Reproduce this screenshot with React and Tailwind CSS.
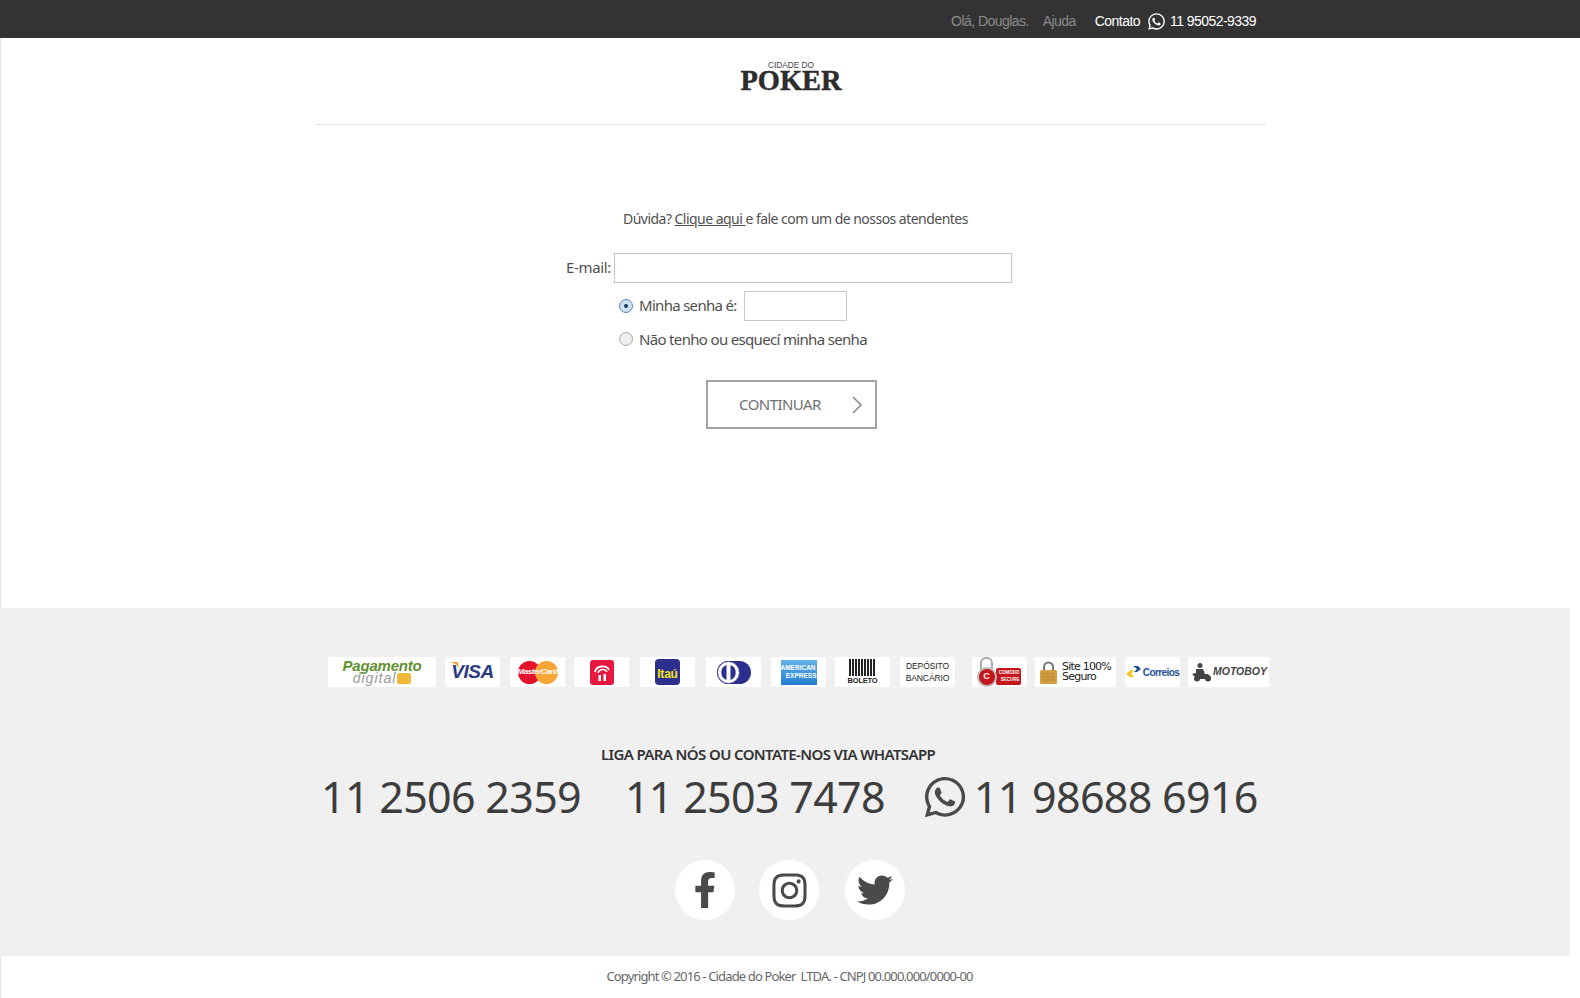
import { FaWhatsapp, FaFacebookF, FaInstagram, FaTwitter } from "react-icons/fa";

const pt = "font-['Noto_Sans',sans-serif]";

function Card({ w, ml = "", children }) {
  return (
    <div className={`${w} ${ml} h-[30px] bg-white flex items-center justify-center shrink-0 overflow-hidden`}>
      {children}
    </div>
  );
}

function Logo() {
  return (
    <svg width="104" height="42" viewBox="0 0 104 42">
      <text x="52" y="8.4" textAnchor="middle" textLength="46" lengthAdjust="spacingAndGlyphs" fontSize="9" fontFamily="Liberation Sans" fill="#444">CIDADE DO</text>
      <text x="52" y="30" textAnchor="middle" textLength="101" lengthAdjust="spacingAndGlyphs" fontSize="29" fontWeight="700" fontFamily="Liberation Serif" fill="#2c2c2c" stroke="#2c2c2c" strokeWidth="0.5">POKER</text>
    </svg>
  );
}

function Payments() {
  return (
    <div className="ml-[328px] mt-[49px] flex items-start font-['Liberation_Sans',sans-serif]">
      <Card w="w-[108px]">
        <div className="flex flex-col items-center leading-none -mt-px">
          <span className="text-[15px] font-bold italic text-[#5f9330] leading-[13px] tracking-[-0.2px]">Pagamento</span>
          <span className="flex items-center gap-[1px] text-[14px] italic text-[#9a9a9a] leading-[13px] tracking-[1px]">
            digital
            <span className="w-[14px] h-[11px] bg-[#f0b93a] rounded-[2px]" />
          </span>
        </div>
      </Card>
      <Card w="w-[55px]" ml="ml-[9px]">
        <div className="relative">
          <svg className="absolute -left-[1px] top-[4px]" width="9" height="6" viewBox="0 0 9 6">
            <path d="M0 0h8l1 6C7 3 4 1 0 0z" fill="#f2a33a" />
          </svg>
          <span className="text-[19px] font-bold italic text-[#2a3a80] tracking-tight">VISA</span>
        </div>
      </Card>
      <Card w="w-[55px]" ml="ml-[10px]">
        <div className="relative w-[40px] h-[23px]">
          <span className="absolute left-0 top-0 w-[23px] h-[23px] rounded-full bg-[#e2132b]" />
          <span className="absolute right-0 top-0 w-[23px] h-[23px] rounded-full bg-[#f7a635]" />
          <span className="absolute inset-0 flex items-center justify-center text-[8px] font-bold italic text-white tracking-tighter">MasterCard</span>
        </div>
      </Card>
      <Card w="w-[55px]" ml="ml-[9px]">
        <svg width="24" height="25" viewBox="0 0 24 25">
          <rect width="24" height="25" rx="3" fill="#e8173f" />
          <path d="M5 12C6 6 16 4 19 10" fill="none" stroke="#fff" strokeWidth="1.8" />
          <path d="M8 13C9 9 15 8 17 12" fill="none" stroke="#fff" strokeWidth="1.5" />
          <path d="M8.5 21v-6h2.5v6z M13.5 21v-7h2.5v7z" fill="#fff" />
        </svg>
      </Card>
      <Card w="w-[55px]" ml="ml-[11px]">
        <div className="w-[25px] h-[26px] rounded-[4px] bg-[#2c2f8e] flex items-center justify-center text-[12px] font-bold text-[#f5e616] tracking-[-0.2px] pt-[3px]">Itaú</div>
      </Card>
      <Card w="w-[55px]" ml="ml-[11px]">
        <svg width="34" height="23" viewBox="0 0 34 23">
          <rect x="0" y="0" width="34" height="23" rx="11.5" fill="#2c2f8e" />
          <circle cx="11.5" cy="11.5" r="11" fill="#fff" stroke="#2c2f8e" strokeWidth="0.8" />
          <path d="M9.5 4v15a8 8 0 0 1 0-15z M13.5 4v15a8 8 0 0 0 0-15z" fill="#2c2f8e" />
        </svg>
      </Card>
      <Card w="w-[55px]" ml="ml-[10px]">
        <div className="w-[36px] h-[25px] bg-linear-to-b from-[#62b2ea] to-[#1f7fcf] flex flex-col justify-center text-[6.5px] font-bold leading-[8px] text-white">
          <span>AMERICAN</span>
          <span className="self-end">EXPRESS</span>
        </div>
      </Card>
      <Card w="w-[55px]" ml="ml-[9px]">
        <div className="flex flex-col items-center">
          <div className="w-[26px] h-[17px] bg-[repeating-linear-gradient(90deg,#222_0,#222_2px,#fff_2px,#fff_3px)]" />
          <span className="text-[7.5px] font-bold leading-[9px] text-[#222] tracking-[-0.2px]">BOLETO</span>
        </div>
      </Card>
      <Card w="w-[55px]" ml="ml-[10px]">
        <span className="text-[8.5px] leading-[12px] text-[#222] text-center tracking-[-0.1px]">DEPÓSITO<br />BANCÁRIO</span>
      </Card>
      <Card w="w-[55px]" ml="ml-[17px]">
        <div className="relative w-[48px] h-[30px]">
          <span className="absolute left-[20px] top-[11px] w-[25px] h-[17px] bg-[#c4161c] rounded-[2px] text-[4.5px] font-bold leading-[7px] text-white text-right pr-[1px] pt-px">COMODO<br />SECURE</span>
          <span className="absolute left-[4px] top-0 w-[13px] h-[14px] border-2 border-[#aaa] rounded-t-[6px]" />
          <span className="absolute left-[1px] top-[10px] w-[20px] h-[20px] rounded-full bg-[#c4161c] border-2 border-[#bbb] flex items-center justify-center text-[9px] font-bold text-white">C</span>
        </div>
      </Card>
      <Card w="w-[81px]" ml="ml-[8px]">
        <div className="flex items-center gap-[5px]">
          <svg width="17" height="23" viewBox="0 0 17 23">
            <path d="M4 10V6a4.5 4.5 0 0 1 9 0v4" fill="none" stroke="#777" strokeWidth="2" />
            <rect x="0" y="9" width="17" height="14" rx="1.5" fill="#d2a042" />
            <path d="M2 13h13M2 16h13M2 19h13" stroke="#b5852c" />
          </svg>
          <span className="text-[11px] leading-[10px] text-[#222] font-['DejaVu_Sans',sans-serif] tracking-[-0.8px]">Site 100%<br />Seguro</span>
        </div>
      </Card>
      <Card w="w-[55px]" ml="ml-[9px]">
        <div className="flex items-center gap-[2px]">
          <svg width="15" height="13" viewBox="0 0 15 13">
            <path d="M0 8l5-4h3L5 8l3 3H4z" fill="#f7c41f" />
            <path d="M7 0h5l3 3-4 3H8l3-3z" fill="#1f4f99" />
          </svg>
          <span className="text-[10px] font-bold text-[#1f4f99] tracking-[-0.6px]">Correios</span>
        </div>
      </Card>
      <Card w="w-[81px]" ml="ml-[8px]">
        <div className="flex items-center gap-[1px] pl-[2px]">
          <svg width="20" height="19" viewBox="0 0 20 19">
            <circle cx="8" cy="2.5" r="2.5" fill="#444" />
            <path d="M4 6h7l2 5h3l3 3-2 2H6l-4-3-2-2 4-1z" fill="#444" />
            <circle cx="5" cy="15.5" r="3" fill="#444" />
            <circle cx="16" cy="15.5" r="3" fill="#444" />
          </svg>
          <span className="text-[10.5px] font-bold italic text-[#444]">MOTOBOY</span>
        </div>
      </Card>
    </div>
  );
}

export default function App() {
  return (
    <div className={`w-[1580px] h-[998px] overflow-hidden bg-white text-[#4f4f4f] ${pt}`}>
      <header className="h-[38px] bg-[#333] flex items-center justify-end pr-[324px] pt-[5px] font-['Liberation_Sans',sans-serif] text-[14px] tracking-[-0.55px]">
        <span className="text-[#8b8b8b]">Olá, Douglas.</span>
        <span className="ml-[14px] text-[#8b8b8b]">Ajuda</span>
        <span className="ml-[19px] text-white">Contato</span>
        <FaWhatsapp className="ml-[7px] text-white text-[19px]" />
        <span className="ml-[4px] text-white">11 95052-9339</span>
      </header>

      <main className="h-[570px] border-l border-[#e4e4e4]">
        <div className="w-[950px] ml-[315px] h-[87px] border-b border-[#e2e2e2] flex flex-col items-center pt-[22px]">
          <Logo />
        </div>

        <p className="mt-[84px] ml-[622px] text-[14px] leading-[20px] tracking-[-0.53px]">
          Dúvida? <a className="underline">Clique aqui </a>e fale com um de nossos atendentes
        </p>

        <form className="mt-[24px] text-[15px]">
          <div className="flex items-center ml-[565px] h-[30px] tracking-[-0.35px]">
            <label className="pb-[2px] w-[48px]">E-mail:</label>
            <input className="w-[398px] h-[30px] border border-[#c4c4c4] bg-white" />
          </div>
          <div className="flex items-center ml-[618px] mt-[8px] h-[30px] tracking-[-0.7px]">
            <span className="w-[14px] h-[14px] rounded-full border border-[#5b86b8] bg-[#cfe0f5] flex items-center justify-center">
              <span className="w-[4px] h-[4px] rounded-full bg-[#1c3c66]" />
            </span>
            <label className="ml-[6px] pb-[2px]">Minha senha é:</label>
            <input className="ml-[7px] w-[103px] h-[30px] border border-[#c9c9c9] bg-white" />
          </div>
          <div className="flex items-center ml-[618px] mt-[8px] h-[20px] tracking-[-0.67px]">
            <span className="w-[14px] h-[14px] rounded-full border border-[#aaa] bg-[#eee]" />
            <label className="ml-[6px]">Não tenho ou esquecí minha senha</label>
          </div>
          <button
            type="button"
            className="mt-[31px] ml-[705px] w-[171px] h-[49px] border-[2px] border-[#a3a3a3] flex items-center text-[#707070] pl-[31px] tracking-[-0.55px]"
          >
            CONTINUAR
            <svg className="ml-[30px]" width="12" height="18" viewBox="0 0 12 18">
              <path d="M2 1l8 8-8 8" fill="none" stroke="#8a8a8a" strokeWidth="1.6" />
            </svg>
          </button>
        </form>
      </main>

      <footer className="w-[1570px] h-[348px] bg-[#f0f0f0] flex flex-col">
        <Payments />
        <h3 className="mt-[57px] ml-[601px] text-[15px] leading-[20px] font-semibold text-[#333] tracking-[-0.62px]">
          LIGA PARA NÓS OU CONTATE-NOS VIA WHATSAPP
        </h3>
        <div className="mt-[3px] ml-[321px] flex items-center text-[43px] leading-[60px] text-[#3d3d3d] tracking-[-0.7px]">
          <span>11 2506 2359</span>
          <span className="ml-[44px]">11 2503 7478</span>
          <FaWhatsapp className="ml-[37px] text-[46px] text-[#4a4a4a]" />
          <span className="ml-[6px]">11 98688 6916</span>
        </div>
        <div className="mt-[33px] ml-[675px] flex text-[#4a4a4a]">
          <a className="w-[60px] h-[60px] rounded-full bg-white flex items-center justify-center text-[36px]"><FaFacebookF /></a>
          <a className="ml-[24px] w-[60px] h-[60px] rounded-full bg-white flex items-center justify-center text-[39px]"><FaInstagram /></a>
          <a className="ml-[26px] w-[60px] h-[60px] rounded-full bg-white flex items-center justify-center text-[36px]"><FaTwitter /></a>
        </div>
      </footer>

      <div className="h-[42px] border-l border-[#e4e4e4] flex items-start justify-center pt-[10px] pr-[2px] text-[13px] leading-[20px] text-[#666] tracking-[-0.86px]">
        Copyright © 2016 - Cidade do Poker&nbsp; LTDA. - CNPJ 00.000.000/0000-00
      </div>
    </div>
  );
}
